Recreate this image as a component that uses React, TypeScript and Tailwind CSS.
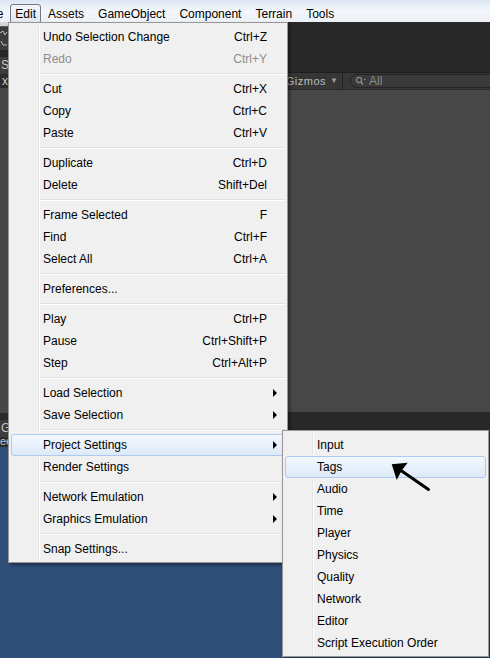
type Entry = {
    label: string
    keys?: string
    off?: boolean
    sub?: boolean
    hot?: boolean
} | null

const editMenu: Entry[] = [
    { label: 'Undo Selection Change', keys: 'Ctrl+Z' },
    { label: 'Redo', keys: 'Ctrl+Y', off: true },
    null,
    { label: 'Cut', keys: 'Ctrl+X' },
    { label: 'Copy', keys: 'Ctrl+C' },
    { label: 'Paste', keys: 'Ctrl+V' },
    null,
    { label: 'Duplicate', keys: 'Ctrl+D' },
    { label: 'Delete', keys: 'Shift+Del' },
    null,
    { label: 'Frame Selected', keys: 'F' },
    { label: 'Find', keys: 'Ctrl+F' },
    { label: 'Select All', keys: 'Ctrl+A' },
    null,
    { label: 'Preferences...' },
    null,
    { label: 'Play', keys: 'Ctrl+P' },
    { label: 'Pause', keys: 'Ctrl+Shift+P' },
    { label: 'Step', keys: 'Ctrl+Alt+P' },
    null,
    { label: 'Load Selection', sub: true },
    { label: 'Save Selection', sub: true },
    null,
    { label: 'Project Settings', sub: true, hot: true },
    { label: 'Render Settings' },
    null,
    { label: 'Network Emulation', sub: true },
    { label: 'Graphics Emulation', sub: true },
    null,
    { label: 'Snap Settings...' },
]

const projectMenu: Entry[] = [
    { label: 'Input' },
    { label: 'Tags', hot: true },
    { label: 'Audio' },
    { label: 'Time' },
    { label: 'Player' },
    { label: 'Physics' },
    { label: 'Quality' },
    { label: 'Network' },
    { label: 'Editor' },
    { label: 'Script Execution Order' },
]

function MenuRow({ entry }: { entry: Entry }) {
    if (!entry) {
        return (
            <div className="h-[8px] flex items-center ml-[30px] mr-[2px]">
                <div className="w-full border-t border-t-[#e0e0e0] border-b border-b-white" />
            </div>
        )
    }
    return (
        <div
            className={
                entry.hot
                    ? 'relative h-[22px] mx-[2px] pl-[31px] pr-[7px] flex items-center border border-[#aecaf0] rounded-[3px] bg-gradient-to-b from-[#f3f8fe] to-[#dde9f9]'
                    : 'relative h-[22px] mx-[2px] pl-[31px] pr-[7px] flex items-center border border-transparent'
            }
        >
            <span className={entry.off ? 'flex-1 text-[#8d8d8d]' : 'flex-1 text-black'}>{entry.label}</span>
            {entry.keys && (
                <span className={entry.off ? 'mr-[10px] text-[#8d8d8d]' : 'mr-[10px] text-black'}>{entry.keys}</span>
            )}
            {entry.sub && (
                <span className="w-0 h-0 border-y-[4px] border-y-transparent border-l-[4px] border-l-black" />
            )}
        </div>
    )
}

function Menu({ entries, className }: { entries: Entry[]; className: string }) {
    return (
        <div
            className={`absolute bg-[#f0f0f0] border border-[#979797] pt-[3px] pb-[2px] shadow-[2px_2px_3px_rgba(0,0,0,0.4)] ${className}`}
        >
            <div className="absolute top-[2px] bottom-[2px] left-[29px] w-[2px] border-l border-l-[#e2e3e3] border-r border-r-white" />
            {entries.map((entry, i) => (
                <MenuRow key={i} entry={entry} />
            ))}
        </div>
    )
}

const topItems = ['File', 'Edit', 'Assets', 'GameObject', 'Component', 'Terrain', 'Tools']

function MenuBar() {
    return (
        <div className="h-[22px] flex items-start bg-gradient-to-b from-[#dbe6f4] via-[#f3f6fa] to-[#eef2f7]">
            <div className="flex mt-[4px] ml-[-23px]">
                {topItems.map(item => (
                    <div
                        key={item}
                        className={
                            item === 'Edit'
                                ? 'h-[20px] px-[4px] flex items-center border border-[#707a86] rounded-[3px] bg-gradient-to-b from-[#f4f6f9] to-[#e3e8ef]'
                                : 'h-[20px] px-[6px] flex items-center border border-transparent'
                        }
                    >
                        {item}
                    </div>
                ))}
            </div>
        </div>
    )
}

function LeftStrip() {
    return (
        <div className="w-[8px] flex flex-col text-[12px] text-[#c8c8c8] overflow-hidden">
            <div className="h-[5px] bg-[#d6d6d6] border-b border-[#5a5a5a]" />
            <div className="h-[23px] bg-[#3c3c3c] relative">
                <svg width="8" height="23" viewBox="0 0 8 23" className="block">
                    <path d="M0 6 L3 4 L5 8 L7 5" stroke="#bdbdbd" strokeWidth="1" fill="none" />
                    <path d="M1 14 L3 18 L7 18" stroke="#bdbdbd" strokeWidth="1" fill="none" />
                </svg>
            </div>
            <div className="h-[7px] bg-[#262626]" />
            <div className="h-[17px] bg-[#3c3c3c] pl-[1px] leading-[17px]">S</div>
            <div className="h-[14px] bg-[#2c2c2c] pl-[2px] leading-[14px]">x</div>
            <div className="h-[325px] bg-[#474747]" />
            <div className="h-[7px] bg-[#2a2a2a]" />
            <div className="h-[17px] bg-[#3c3c3c] pl-[1px] leading-[17px]">G</div>
            <div className="h-[10px] bg-[#2c2c2c] leading-[8px] text-[11px]">ee</div>
            <div className="flex-1 bg-[#2f4f79]" />
        </div>
    )
}

function EditorArea() {
    return (
        <div className="flex-1 flex flex-col overflow-hidden">
            <div className="h-[50px] bg-[#282828]" />
            <div className="h-[17px] bg-[#363636] border-t border-[#1e1e1e] flex items-center justify-end text-[11px] text-[#bcbcbc]">
                <span className="tracking-[0.5px]">Gizmos</span>
                <span className="ml-[4px] text-[8px] text-[#9a9a9a]">▼</span>
                <div className="ml-[4px] w-px h-full bg-[#222]" />
                <div className="ml-[7px] mr-[-20px] w-[160px] h-[14px] rounded-full border border-[#242424] bg-[#3a3a3a] flex items-center pl-[4px] text-[12px] text-[#8c8c8c]">
                    <svg width="12" height="10" viewBox="0 0 12 10" className="mr-[2px]">
                        <circle cx="4" cy="4" r="2.6" stroke="#8c8c8c" strokeWidth="1.2" fill="none" />
                        <path d="M6 6 L8 8.5" stroke="#8c8c8c" strokeWidth="1.4" />
                        <path d="M8.5 3 L11 3 L9.75 4.5 Z" fill="#8c8c8c" />
                    </svg>
                    All
                </div>
            </div>
            <div className="h-[323px] bg-[#474747] border-t border-[#2a2a2a]" />
            <div className="h-[18px] bg-[#282828]" />
            <div className="h-[16px] bg-[#3c3c3c]" />
            <div className="flex-1 bg-[#2f4f79]" />
        </div>
    )
}

export default function App() {
    return (
        <div className="relative w-[490px] h-[658px] overflow-hidden font-['Liberation_Sans',Arial,sans-serif] text-[12px] text-black">
            <MenuBar />
            <div className="flex h-[636px]">
                <LeftStrip />
                <EditorArea />
            </div>

            <Menu entries={editMenu} className="left-[8px] top-[22px] w-[280px]" />
            <Menu entries={projectMenu} className="left-[282px] top-[430px] w-[207px]" />

            <svg
                className="absolute left-[385px] top-[455px]"
                width="50"
                height="40"
                viewBox="0 0 50 40"
            >
                <path d="M43.5 34.5 L16 15.5" stroke="#000" strokeWidth="3" strokeLinecap="round" />
                <path d="M6.7 9.3 L22.7 7.7 L17 15 L11.7 25 Z" fill="#000" />
            </svg>
        </div>
    )
}
